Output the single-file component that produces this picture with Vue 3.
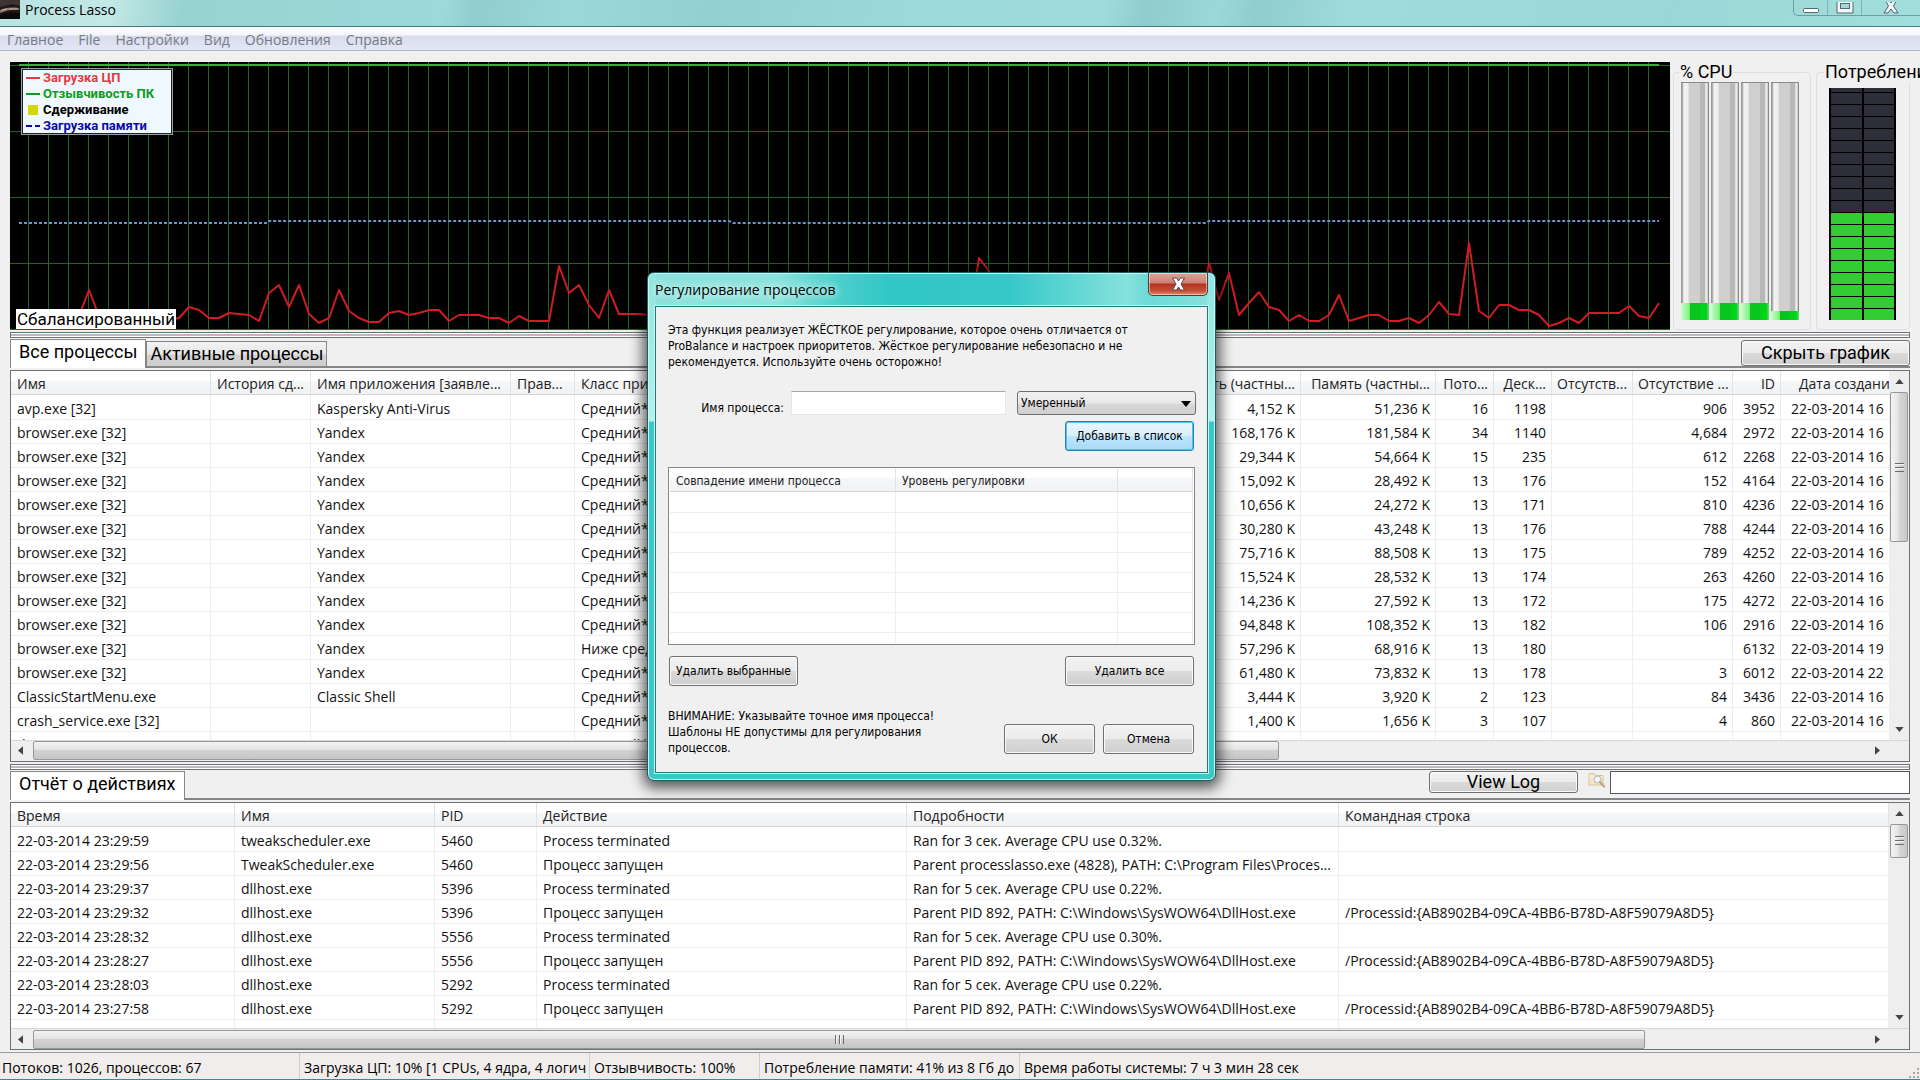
<template>
  <div class="window">
    <header class="titlebar">
      <svg class="app-icon" width="20" height="19" viewBox="0 0 20 19">
        <rect width="20" height="19" fill="#1c1918" />
        <path d="M0 0h20v6l-8-2-12 3z" fill="#3b3634" />
        <path d="M0 10c4-2 9-3 19-2v2c-6-1-12 0-19 3z" fill="#8d7567" />
        <path d="M2 10l5-1M9 9l8 0" stroke="#c9b09c" stroke-width="1" />
        <path d="M0 15c5-3 12-3 20-2v6H0z" fill="#0a0909" />
      </svg>
      <h1>Process Lasso</h1>
      <div class="caption-buttons">
        <button type="button" aria-label="Свернуть">
          <svg width="18" height="12" viewBox="0 0 18 12"><rect x="1.5" y="6.5" width="15" height="4" rx="1" fill="#fff" stroke="#4f6a74" /></svg>
        </button>
        <button type="button" aria-label="Развернуть">
          <svg width="18" height="12" viewBox="0 0 18 12"><path d="M1 -3h16v14h-16z" fill="#f4f6f8" stroke="#4f6a74" /><rect x="4.5" y="1.5" width="9" height="5" fill="#a9d6d8" stroke="#4f6a74" /></svg>
        </button>
        <button type="button" class="wide" aria-label="Закрыть">
          <svg width="16" height="12" viewBox="0 0 16 12"><path d="M2-2h4l2 3 2-3h4l-3.500 6L15 11h-4L8 7l-3 4H1l4.500-7z" fill="#f1f3f5" stroke="#4f5f6b" /></svg>
        </button>
      </div>
    </header>

    <nav class="menu">
      <a v-for="item in menu" :key="item" href="#">{{ item }}</a>
    </nav>

    <main>
      <section class="top">
        <div class="graph">
          <svg viewBox="0 0 1660 268" preserveAspectRatio="none">
            <g stroke="#1e6428" stroke-width="1">
              <line v-for="x in gridX" :key="'x' + x" :x1="x" :x2="x" y1="0" y2="268" />
              <line v-for="y in gridY" :key="'y' + y" x1="0" x2="1660" :y1="y" :y2="y" />
            </g>
            <path d="M9 3H1649" stroke="#3cab3c" stroke-width="2" />
            <path
              d="M9 161H257L259 159H719L723 161H1195L1199 159H1649"
              fill="none"
              stroke="#6f94d2"
              stroke-width="2"
              stroke-dasharray="3 2"
            />
            <polyline :points="cpuLine" fill="none" stroke="#d01c22" stroke-width="2" stroke-linejoin="round" />
          </svg>
          <ul class="legend">
            <li class="cpu"><i class="line"></i>Загрузка ЦП</li>
            <li class="resp"><i class="line"></i>Отзывчивость ПК</li>
            <li><i class="box"></i>Сдерживание</li>
            <li class="mem"><i class="dash"></i>Загрузка памяти</li>
          </ul>
          <span class="plan">Сбалансированный</span>
        </div>

        <fieldset class="meter cpu-meter">
          <legend>% CPU</legend>
          <div class="bars">
            <div v-for="(load, i) in cores" :key="i" class="bar">
              <div class="fill" :style="{ height: load + '%' }"></div>
            </div>
          </div>
        </fieldset>

        <fieldset class="meter mem-meter">
          <legend>Потребление</legend>
          <div class="led">
            <div v-for="c in 2" :key="c" class="led-col">
              <span v-for="n in 20" :key="n" :class="{ on: n <= 9 }"></span>
            </div>
          </div>
        </fieldset>
      </section>

      <div class="splitter"></div>

      <div class="tabs">
        <button type="button" class="tab active">Все процессы</button>
        <button type="button" class="tab">Активные процессы</button>
        <div class="tab-tools">
          <button type="button" class="btn hide-graph">Скрыть график</button>
        </div>
      </div>

      <section class="list processes">
        <div class="view">
          <table>
            <colgroup>
              <col class="w200" /><col class="w100" /><col class="w200" /><col class="w64" /><col />
              <col class="w135" /><col class="w135" /><col class="w58" /><col class="w58" />
              <col class="w81" /><col class="w100" /><col class="w48" /><col class="w108" />
            </colgroup>
            <thead>
              <tr><th v-for="(h, i) in processHead" :key="i" :class="{ num: i > 4, date: i === 12 }">{{ h }}</th></tr>
            </thead>
            <tbody>
              <tr v-for="(p, r) in processes" :key="r">
                <td v-for="(v, i) in p" :key="i" :class="{ num: i > 4, date: i === 12 }">{{ v }}</td>
              </tr>
            </tbody>
          </table>
        </div>
        <div class="vscroll">
          <svg class="arrow" viewBox="0 0 10 6"><path d="M5 0l5 6H0z" /></svg>
          <div class="track"><div class="thumb tall"><i></i></div></div>
          <svg class="arrow" viewBox="0 0 10 6"><path d="M0 0h10L5 6z" /></svg>
        </div>
        <div class="hscroll">
          <svg class="arrow" viewBox="0 0 6 10"><path d="M6 0v10L0 5z" /></svg>
          <div class="track"><div class="thumb wide"><i></i></div></div>
          <svg class="arrow" viewBox="0 0 6 10"><path d="M0 0l6 5-6 5z" /></svg>
        </div>
      </section>

      <div class="splitter"></div>

      <div class="tabs">
        <button type="button" class="tab active log-tab">Отчёт о действиях</button>
        <div class="tab-tools log-tools">
          <button type="button" class="btn view-log">View Log</button>
          <label for="logFilter" aria-label="Поиск">
            <svg width="18" height="18" viewBox="0 0 18 18">
              <path d="M1 2.500h5l1.500 2H15V14H1z" fill="#f3e6cb" stroke="#d8c49b" />
              <path d="M1.500 6h13" stroke="#fbf5e6" />
              <circle cx="9.500" cy="8.500" r="3.500" fill="#f3f7f8" stroke="#b9b5a8" />
              <path d="M12 11l4 4.500" stroke="#c0a880" stroke-width="2.500" stroke-linecap="round" />
            </svg>
          </label>
          <input id="logFilter" v-model="logFilter" type="text" />
        </div>
      </div>

      <section class="list log">
        <div class="view">
          <table>
            <colgroup>
              <col class="w224" /><col class="w200" /><col class="w102" /><col class="w370" /><col class="w432" /><col />
            </colgroup>
            <thead>
              <tr><th v-for="h in logHead" :key="h">{{ h }}</th></tr>
            </thead>
            <tbody>
              <tr v-for="(l, r) in log" :key="r">
                <td v-for="(v, i) in l" :key="i">{{ v }}</td>
              </tr>
            </tbody>
          </table>
        </div>
        <div class="vscroll">
          <svg class="arrow" viewBox="0 0 10 6"><path d="M5 0l5 6H0z" /></svg>
          <div class="track"><div class="thumb"><i></i></div></div>
          <svg class="arrow" viewBox="0 0 10 6"><path d="M0 0h10L5 6z" /></svg>
        </div>
        <div class="hscroll">
          <svg class="arrow" viewBox="0 0 6 10"><path d="M6 0v10L0 5z" /></svg>
          <div class="track"><div class="thumb"><i></i></div></div>
          <svg class="arrow" viewBox="0 0 6 10"><path d="M0 0l6 5-6 5z" /></svg>
        </div>
      </section>
    </main>

    <footer class="status">
      <span class="s1">Потоков: 1026, процессов: 67</span>
      <span class="s2">Загрузка ЦП: 10% [1 CPUs, 4 ядра, 4 логич</span>
      <span class="s3">Отзывчивость: 100%</span>
      <span class="s4">Потребление памяти: 41% из 8 Гб до</span>
      <span class="s5">Время работы системы: 7 ч 3 мин 28 сек</span>
      <svg class="grip" width="12" height="12" viewBox="0 0 12 12" fill="#a8a8a8">
        <path d="M9 1h2v2H9zM5 5h2v2H5zM9 5h2v2H9zM1 9h2v2H1zM5 9h2v2H5zM9 9h2v2H9z" />
      </svg>
    </footer>

    <form class="dialog" role="dialog" aria-labelledby="dialogTitle" @submit.prevent>
      <div class="dialog-title">
        <h2 id="dialogTitle">Регулирование процессов</h2>
        <button type="button" class="dialog-close" aria-label="Закрыть">
          <svg width="15" height="14" viewBox="0 0 15 14">
            <path d="M1.500 1h4l2 3 2-3h4L10 7l3.500 6h-4l-2-3-2 3h-4L5 7z" fill="#fff" stroke="#5d4a52" />
          </svg>
        </button>
      </div>
      <div class="dialog-body">
        <p class="info">
          Эта функция реализует ЖЁСТКОЕ регулирование, которое очень отличается от<br />
          ProBalance и настроек приоритетов. Жёсткое регулирование небезопасно и не<br />
          рекомендуется. Используйте очень осторожно!
        </p>
        <div class="row">
          <label for="procName">Имя процесса:</label>
          <input id="procName" v-model="procName" type="text" />
          <span class="select">
            <select v-model="level" aria-label="Уровень регулировки">
              <option>Умеренный</option>
            </select>
            <svg width="10" height="6" viewBox="0 0 10 6"><path d="M0 0h10L5 6z" /></svg>
          </span>
        </div>
        <button type="button" class="btn add">Добавить в список</button>
        <div class="rules">
          <table>
            <colgroup><col class="w226" /><col class="w222" /><col /></colgroup>
            <thead>
              <tr><th>Совпадение имени процесса</th><th>Уровень регулировки</th><th></th></tr>
            </thead>
            <tbody>
              <tr v-for="n in 8" :key="n"><td></td><td></td><td></td></tr>
            </tbody>
          </table>
        </div>
        <div class="between">
          <button type="button" class="btn">Удалить выбранные</button>
          <button type="button" class="btn">Удалить все</button>
        </div>
        <div class="between bottom">
          <p>
            ВНИМАНИЕ: Указывайте точное имя процесса!<br />
            Шаблоны НЕ допустимы для регулирования<br />
            процессов.
          </p>
          <div class="actions">
            <button type="submit" class="btn">ОК</button>
            <button type="button" class="btn">Отмена</button>
          </div>
        </div>
      </div>
    </form>
  </div>
</template>

<script setup>
import { ref } from 'vue';

const procName = ref('');
const level = ref('Умеренный');
const logFilter = ref('');

const menu = ['Главное', 'File', 'Настройки', 'Вид', 'Обновления', 'Справка'];
const cores = [7, 7, 7, 4];

const gridX = Array.from({ length: 82 }, (_, i) => 18.5 + i * 20);
const gridY = [3.5, 69.5, 135.5, 201.5, 267.5];

// One sample every 10 units, smaller value = higher load
const cpu = [
  256, 256, 255, 256, 257, 256, 254, 228, 254, 256, 257, 255, 256, 256, 257, 258,
  256, 245, 248, 256, 256, 251, 252, 253, 259, 231, 223, 245, 223, 252, 261, 256,
  228, 249, 256, 260, 260, 251, 249, 253, 251, 248, 248, 259, 253, 253, 253, 256,
  256, 261, 254, 259, 259, 259, 204, 231, 223, 243, 256, 228, 252, 252, 252, 253,
  ...Array(31).fill(255), 260, 196, 209, ...Array(21).fill(255),
  201, 238, 211, 253, 241, 230, 245, 248, 259, 253, 259, 259, 253, 233, 259, 256,
  253, 253, 259, 259, 256, 261, 253, 240, 252, 253, 181, 249, 256, 243, 243, 248,
  248, 253, 264, 261, 256, 261, 251, 251, 251, 251, 244, 254, 256, 241
];
const cpuLine = cpu.map((y, i) => `${9 + i * 10},${y}`).join(' ');

const processHead = [
  'Имя', 'История сд...', 'Имя приложения [заявле...', 'Прав...', 'Класс приоритета',
  'Память (частны...', 'Память (частны...', 'Пото...', 'Деск...', 'Отсутств...',
  'Отсутствие ...', 'ID', 'Дата создани'
];

function proc(name, app, cls, mem, peak, threads, handles, faults, id, hour = '16', rule = '') {
  return [name, '', app, rule, cls, mem + ' K', peak + ' K', threads, handles, '', faults, id, '22-03-2014 ' + hour];
}

const processes = [
  proc('avp.exe [32]', 'Kaspersky Anti-Virus', 'Средний*', '4,152', '51,236', 16, 1198, '906', 3952),
  proc('browser.exe [32]', 'Yandex', 'Средний*', '168,176', '181,584', 34, 1140, '4,684', 2972),
  proc('browser.exe [32]', 'Yandex', 'Средний*', '29,344', '54,664', 15, 235, '612', 2268),
  proc('browser.exe [32]', 'Yandex', 'Средний*', '15,092', '28,492', 13, 176, '152', 4164),
  proc('browser.exe [32]', 'Yandex', 'Средний*', '10,656', '24,272', 13, 171, '810', 4236),
  proc('browser.exe [32]', 'Yandex', 'Средний*', '30,280', '43,248', 13, 176, '788', 4244),
  proc('browser.exe [32]', 'Yandex', 'Средний*', '75,716', '88,508', 13, 175, '789', 4252),
  proc('browser.exe [32]', 'Yandex', 'Средний*', '15,524', '28,532', 13, 174, '263', 4260),
  proc('browser.exe [32]', 'Yandex', 'Средний*', '14,236', '27,592', 13, 172, '175', 4272),
  proc('browser.exe [32]', 'Yandex', 'Средний*', '94,848', '108,352', 13, 182, '106', 2916),
  proc('browser.exe [32]', 'Yandex', 'Ниже среднего', '57,296', '68,916', 13, 180, '', 6132, '19'),
  proc('browser.exe [32]', 'Yandex', 'Средний*', '61,480', '73,832', 13, 178, '3', 6012, '22'),
  proc('ClassicStartMenu.exe', 'Classic Shell', 'Средний*', '3,444', '3,920', 2, 123, '84', 3436),
  proc('crash_service.exe [32]', '', 'Средний*', '1,400', '1,656', 3, 107, '4', 860),
  proc('dwm.exe', 'Operating', 'Средний*', '34,976', '43,216', 5, 142, '436', 3360, '16', 'Ис')
];

const logHead = ['Время', 'Имя', 'PID', 'Действие', 'Подробности', 'Командная строка'];
const host = 'Parent PID 892, PATH: C:\\Windows\\SysWOW64\\DllHost.exe';
const cmd = '/Processid:{AB8902B4-09CA-4BB6-B78D-A8F59079A8D5}';
const log = [
  ['22-03-2014 23:29:59', 'tweakscheduler.exe', '5460', 'Process terminated', 'Ran for 3 сек. Average CPU use 0.32%.', ''],
  ['22-03-2014 23:29:56', 'TweakScheduler.exe', '5460', 'Процесс запущен', 'Parent processlasso.exe (4828), PATH: C:\\Program Files\\Proces...', ''],
  ['22-03-2014 23:29:37', 'dllhost.exe', '5396', 'Process terminated', 'Ran for 5 сек. Average CPU use 0.22%.', ''],
  ['22-03-2014 23:29:32', 'dllhost.exe', '5396', 'Процесс запущен', host, cmd],
  ['22-03-2014 23:28:32', 'dllhost.exe', '5556', 'Process terminated', 'Ran for 5 сек. Average CPU use 0.30%.', ''],
  ['22-03-2014 23:28:27', 'dllhost.exe', '5556', 'Процесс запущен', host, cmd],
  ['22-03-2014 23:28:03', 'dllhost.exe', '5292', 'Process terminated', 'Ran for 5 сек. Average CPU use 0.22%.', ''],
  ['22-03-2014 23:27:58', 'dllhost.exe', '5292', 'Процесс запущен', host, cmd],
  ['', '', '', '', '', '']
];
</script>

<style>
body {
  margin: 0;
  overflow: hidden;
}
</style>

<style scoped>
.window {
  position: relative;
  display: flex;
  flex-direction: column;
  height: 100vh;
  box-sizing: border-box;
  border-bottom: 1px solid #2c8f92;
  overflow: hidden;
  background: #f0f0f0;
  color: #111;
  font: 14px/20px "Open Sans", "Noto Sans", sans-serif;
}
button,
input,
select {
  box-sizing: border-box;
  margin: 0;
  padding: 0;
  font: inherit;
  color: inherit;
}

/* title bar and menu */
.titlebar {
  display: flex;
  align-items: flex-start;
  flex: none;
  height: 26px;
  border-bottom: 1px solid #3f7d84;
  background: linear-gradient(100deg, #b7e3e1 0, #c3e8e6 110px, #98d3d2 180px, #9dd9d8 440px, #90cdcc 470px, #9bd9d8 560px, #93d1d0 700px, #9cdad9 900px, #9edbda 1090px, #8fcccb 1130px, #9ad9d8 1200px, #90cecd 1240px, #9edbda 1330px, #9ad7d6 1650px, #a3dfdc 1920px);
}
.titlebar h1 {
  flex: 1;
  margin: 0 0 0 5px;
  font-size: 14px;
  font-weight: 400;
  line-height: 20px;
  color: #000;
}
.caption-buttons {
  display: flex;
  border: 1px solid #6b9fa5;
  border-top: 0;
  border-right: 0;
  border-radius: 0 0 0 5px;
}
.caption-buttons button {
  width: 34px;
  height: 15px;
  border: 0;
  border-right: 1px solid #7fb2b6;
  background: none;
  line-height: 0;
}
.caption-buttons svg {
  display: block;
  margin: 0 auto;
}
.caption-buttons .wide {
  width: 58px;
  border-right: 0;
}
.menu {
  display: flex;
  flex: none;
  gap: 15px;
  height: 23px;
  padding: 0 7px;
  border-bottom: 1px solid #b4b7cc;
  background: linear-gradient(#fff 0, #f3f5fb 35%, #d8dcea 40%, #dfe3f4 80%, #e2e6f5 100%);
  line-height: 25px;
}
.menu a {
  color: #777a82;
  text-decoration: none;
}

main {
  display: flex;
  flex: 1;
  flex-direction: column;
  min-height: 0;
  padding: 11px 10px 2px;
}

/* graph and meters */
.top {
  display: flex;
  flex: none;
  height: 268px;
}
.graph {
  position: relative;
  flex: 1;
  min-width: 0;
  background: #000;
}
.graph > svg {
  display: block;
  width: 100%;
  height: 100%;
}
.legend {
  position: absolute;
  top: 6px;
  left: 11px;
  width: 146px;
  margin: 0;
  padding: 1px 0 0 4px;
  border: 1px solid #9aa0a4;
  background: #f0f8ff;
  box-shadow: inset 0 0 0 1px #222;
  list-style: none;
  font: bold 13px/16px Roboto, "Open Sans", sans-serif;
  color: #000;
}
.legend li {
  display: flex;
  align-items: center;
}
.legend i {
  width: 14px;
  height: 2px;
  margin-right: 3px;
  background: currentColor;
}
.legend .box {
  width: 10px;
  height: 10px;
  margin: 0 5px 0 2px;
  background: #d2d60a;
}
.legend .dash {
  background: linear-gradient(90deg, #0b0ba8 6px, transparent 6px 9px, #0b0ba8 9px);
}
.legend .cpu { color: #e23c40; }
.legend .resp { color: #109a1e; }
.legend .mem { color: #0b0ba8; }
.plan {
  position: absolute;
  bottom: 1px;
  left: 6px;
  padding: 0 1px;
  background: #fff;
  font: 17px/20px Roboto, "Open Sans", sans-serif;
  color: #000;
}
.meter {
  display: flex;
  flex: none;
  box-sizing: border-box;
  min-width: 0;
  margin: 0;
  padding: 0;
  border: 1px solid #dcdfe2;
  border-radius: 4px;
  font: 18px/20px Roboto, "Open Sans", sans-serif;
  color: #000;
}
.meter legend {
  margin-left: 5px;
  padding: 0 1px;
  white-space: nowrap;
}
.mem-meter legend {
  margin-left: 7px;
}
.cpu-meter {
  width: 138px;
  margin-left: 3px;
}
.mem-meter {
  width: 94px;
  margin-left: 5px;
}
.bars {
  display: flex;
  gap: 2px;
  height: 238px;
  padding: 0 7px;
}
.bar {
  display: flex;
  align-items: flex-end;
  box-sizing: border-box;
  width: 28px;
  border-top: 1px solid #8a8a8a;
  background: linear-gradient(90deg, #999 1px, #f2f2f2 3px, #eee 25%, #cfcfcf 30% 66%, #b8b8b8 68% 85%, #e8e8e8 88% 94%, #888 97%);
}
.fill {
  width: 100%;
  background: linear-gradient(90deg, #c8ffc8, #7ff07f 30%, #08c51e 33% 66%, #00d41a 70% 90%, #66e070);
}
.led {
  display: flex;
  gap: 2px;
  box-sizing: border-box;
  width: 67px;
  height: 232px;
  margin: 6px 0 0 12px;
  padding: 0 2px;
  background: #000;
}
.led-col {
  display: flex;
  flex: 1;
  flex-direction: column-reverse;
  gap: 1px;
  overflow: hidden;
}
.led-col span {
  flex: none;
  height: 11px;
  background: #2e2e3b;
}
.led-col .on {
  background: #33cc33;
}

.splitter {
  flex: none;
  height: 4px;
  margin: 2px 0 0;
  border: 1px solid #6f7076;
  background: linear-gradient(#fff 1px, #b9bac0 1px 3px, #fff 3px);
}

/* tabs */
.tabs {
  display: flex;
  align-items: flex-end;
  flex: none;
  height: 30px;
  margin-bottom: 2px;
  font: 18px/20px Roboto, "Open Sans", sans-serif;
  color: #000;
}
.tab {
  height: 27px;
  padding: 0 3px;
  border: 1px solid #85858a;
  border-bottom-width: 2px;
  background: linear-gradient(#f3f3f3, #e6e6e6 50%, #d2d2d2 55%, #cfcfcf);
}
.tab.active {
  height: 29px;
  padding: 0 8px 4px;
  border-bottom: 0;
  background: #fff;
}
.tab-tools {
  display: flex;
  flex: 1;
  align-items: center;
  justify-content: flex-end;
  height: 27px;
  border-bottom: 2px solid #85858a;
}
.log-tools {
  align-items: flex-start;
}
.btn {
  border: 1px solid #707070;
  border-radius: 3px;
  background: linear-gradient(#f3f3f3, #ebebeb 50%, #dadada 52%, #cfcfcf);
  box-shadow: inset 0 0 0 1px #fafafa;
}
.hide-graph {
  width: 169px;
  height: 26px;
}
.view-log {
  width: 149px;
  height: 22px;
}
.tab-tools label {
  display: flex;
  margin: 0 4px 0 10px;
}
.tab-tools input {
  width: 300px;
  height: 23px;
  border: 1px solid #55565c;
  background: #fff;
}

/* list views */
.list {
  display: grid;
  grid-template: minmax(0, 1fr) 21px / minmax(0, 1fr) 20px;
  box-sizing: border-box;
  min-height: 0;
  border: 1px solid #6f7076;
  background: #fff;
}
.processes { flex: 392 1 0; }
.log { flex: 248 1 0; }
.view {
  overflow: hidden;
}
table {
  width: 100%;
  border-spacing: 0;
  table-layout: fixed;
}
th,
td {
  box-sizing: border-box;
  height: 24px;
  padding: 3px 6px 0;
  border-right: 1px solid #ededed;
  border-bottom: 1px solid #ededed;
  overflow: hidden;
  line-height: 20px;
  text-align: left;
  vertical-align: bottom;
  white-space: nowrap;
}
th {
  border-right-color: #e0e3e8;
  border-bottom-color: #d5d5d5;
  background: linear-gradient(#fff 40%, #f5f6f8 45%, #f1f2f4);
  font-weight: 400;
  color: #222;
}
tbody tr:first-child td {
  height: 25px;
}
.num {
  padding: 3px 5px 0;
  text-align: right;
}
td.date,
th.date {
  padding: 3px 0 0 10px;
  border-right: 0;
  text-align: left;
}
th.date {
  padding-left: 18px;
}
.w48 { width: 48px; }
.w58 { width: 58px; }
.w64 { width: 64px; }
.w81 { width: 81px; }
.w100 { width: 100px; }
.w102 { width: 102px; }
.w108 { width: 108px; }
.w135 { width: 135px; }
.w200 { width: 200px; }
.w222 { width: 222px; }
.w224 { width: 224px; }
.w226 { width: 226px; }
.w370 { width: 370px; }
.w432 { width: 432px; }

/* scroll bars */
.vscroll,
.hscroll {
  display: flex;
  align-items: center;
  background: #eeeeee;
}
.vscroll {
  flex-direction: column;
  padding: 8px 0;
}
.hscroll {
  grid-column: 1 / 3;
  padding: 0 29px 0 7px;
  border-top: 1px solid #d8d8d8;
}
.arrow {
  flex: none;
  fill: #444;
}
.vscroll .arrow {
  width: 9px;
  height: 5px;
}
.hscroll .arrow {
  width: 5px;
  height: 9px;
}
.track {
  flex: 1;
}
.vscroll .track {
  width: 18px;
  margin: 8px 0;
}
.hscroll .track {
  height: 19px;
  margin: 0 10px;
}
.thumb {
  display: flex;
  align-items: center;
  justify-content: center;
  box-sizing: border-box;
  border: 1px solid #979797;
  border-radius: 2px;
}
.vscroll .thumb {
  height: 19%;
  background: linear-gradient(90deg, #f3f3f3, #e6e6e6 45%, #d6d6d6 50%, #c8c8c8);
}
.vscroll .thumb.tall {
  height: 46%;
}
.hscroll .thumb {
  width: 88%;
  height: 100%;
  background: linear-gradient(#f3f3f3, #e4e4e4 45%, #d2d2d2 50%, #c6c6c6);
}
.hscroll .thumb.wide {
  width: 68%;
}
.thumb i {
  width: 9px;
  height: 9px;
  background: repeating-linear-gradient(90deg, #6a6a6a 0 1px, #f4f4f4 1px 2px, transparent 2px 4px);
}
.vscroll .thumb i {
  background: repeating-linear-gradient(#6a6a6a 0 1px, #f4f4f4 1px 2px, transparent 2px 4px);
}

/* status bar */
.status {
  display: flex;
  flex: none;
  align-items: flex-end;
  height: 26px;
  border-top: 1px solid #9c9c9c;
  background: #f0edec;
  color: #000;
}
.status span {
  box-sizing: border-box;
  flex: none;
  padding: 5px 0 1px 4px;
  border-right: 1px solid #d0cfce;
  overflow: hidden;
  white-space: nowrap;
}
.status .s1 {
  width: 300px;
  padding-left: 2px;
}
.status .s2 { width: 290px; }
.status .s3 { width: 170px; }
.status .s4 { width: 260px; }
.status .s5 {
  flex: 1;
  border-right: 0;
}

/* throttle dialog */
.dialog {
  position: absolute;
  top: 272px;
  left: 647px;
  box-sizing: border-box;
  width: 569px;
  padding: 0 7px 7px;
  border: 1px solid #1d5d66;
  border-radius: 7px;
  background:
    linear-gradient(#8ee5df 0, #b5f1ec 148px, transparent 149px) left / 8px 100% no-repeat,
    linear-gradient(#8ee5df 0, #b5f1ec 148px, transparent 149px) right / 8px 100% no-repeat,
    linear-gradient(90deg, #8be2dc 0, #8be2dc 130px, #4bcfcb 190px, #31c7c6 240px, #34c8c7 360px, #86e2dc 480px, #6cdad6 500px, #8be2dc 100%) top / 100% 34px no-repeat,
    #3ac7c6;
  box-shadow: inset 0 0 0 1px #c9f5f2, 0 3px 14px 4px rgba(0, 0, 0, 0.65);
  font: 12px/16px "DejaVu Sans Condensed", "Open Sans", sans-serif;
  color: #000;
}
.dialog-title {
  display: flex;
  justify-content: space-between;
  height: 33px;
}
.dialog h2 {
  margin: 0;
  font: 14px/33px "Open Sans", sans-serif;
  text-shadow: 0 0 8px #dffaf8, 0 0 8px #dffaf8;
}
.dialog-close {
  width: 60px;
  height: 23px;
  border: 1px solid #59343a;
  border-top: 0;
  border-radius: 0 0 5px 5px;
  background: linear-gradient(#dba596, #cb8272 45%, #b23320 50%, #c44e35 80%, #dd8a66);
  box-shadow: inset 0 0 0 1px rgba(255, 255, 255, 0.5);
  line-height: 0;
}
.dialog-body {
  padding: 15px 12px 16px;
  border: 1px solid #22767c;
  background: #f0f0f0;
  box-shadow: 0 0 0 1px #c9f5f2;
}
.dialog p {
  margin: 0;
  white-space: nowrap;
}
.row {
  display: flex;
  align-items: flex-start;
  justify-content: flex-end;
  margin-top: 21px;
}
.row label {
  padding: 9px 7px 0 0;
}
.row input {
  width: 215px;
  height: 24px;
  border: 1px solid #e3e6ea;
  border-top-color: #a4a8b0;
  background: #fff;
}
.select {
  position: relative;
  margin: 0 -1px 0 11px;
}
.select select {
  display: block;
  width: 179px;
  height: 24px;
  padding-left: 3px;
  border: 1px solid #707070;
  border-radius: 3px;
  background: linear-gradient(#f1f1f1, #e8e8e8 50%, #d8d8d8 55%, #cfcfcf);
  appearance: none;
}
.select svg {
  position: absolute;
  top: 10px;
  right: 5px;
  pointer-events: none;
}
.dialog .btn {
  width: 129px;
  height: 30px;
  white-space: nowrap;
}
.dialog .add {
  display: block;
  margin: 5px 1px 0 auto;
  border-color: #2f7fae;
  background: linear-gradient(#e9f6fd, #d9f0fc 48%, #bee6fd 52%, #a7d9f5);
  box-shadow: inset 0 0 0 1px #4fc4f0;
}
.rules {
  height: 176px;
  margin-top: 16px;
  padding: 0 1px;
  border: 1px solid #828790;
  overflow: hidden;
  background: #fff;
}
.rules td {
  height: 20px;
}
.rules tbody tr:first-child td {
  height: 21px;
}
.between {
  display: flex;
  align-items: center;
  justify-content: space-between;
  margin: 11px 1px 0;
}
.bottom {
  align-items: flex-end;
  margin: 22px 1px 0 0;
}
.actions {
  display: flex;
  gap: 8px;
  padding-bottom: 2px;
}
.dialog .actions .btn {
  width: 91px;
}
</style>
